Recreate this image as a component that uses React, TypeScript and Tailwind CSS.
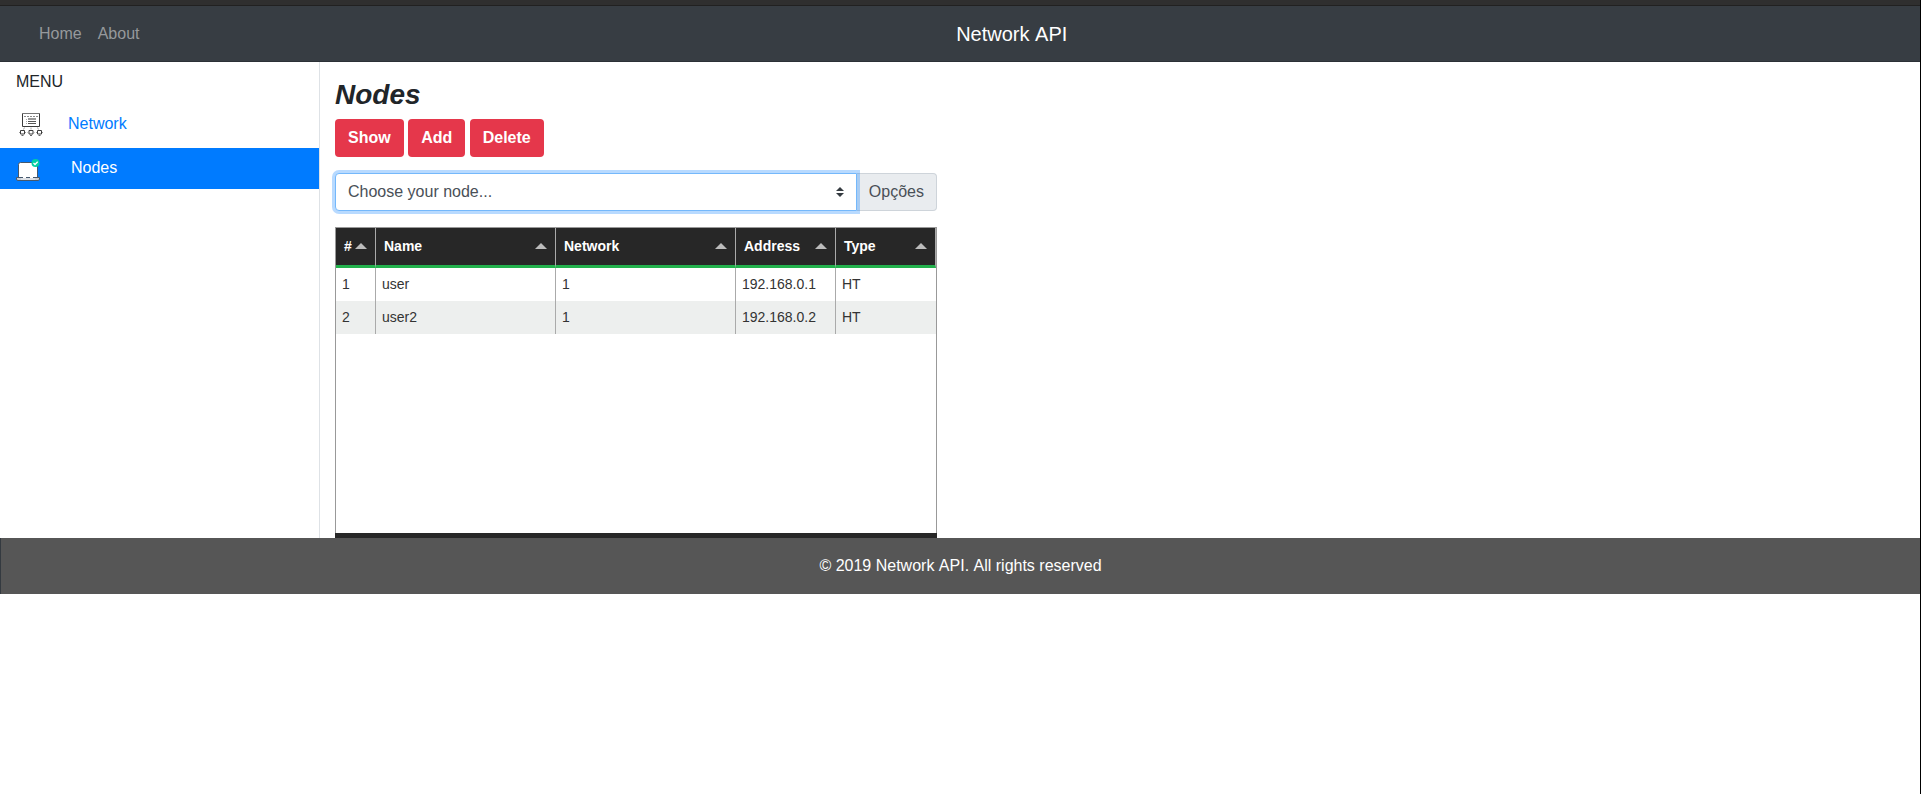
import React from "react";

const columns = [
  { label: "#", width: "w-10" },
  { label: "Name", width: "w-[180px]" },
  { label: "Network", width: "w-[180px]" },
  { label: "Address", width: "w-[100px]" },
  { label: "Type", width: "w-[100px]" },
];

const rows = [
  ["1", "user", "1", "192.168.0.1", "HT"],
  ["2", "user2", "1", "192.168.0.2", "HT"],
];

function NetworkIcon() {
  return (
    <svg className="size-6" viewBox="0 0 24 24" fill="none" aria-hidden="true">
      <path d="M3 .5h18" stroke="#777" />
      <path d="M3.500 1v12.500h17V1" stroke="#3c3c3c" />
      <path d="M5 3.500h14" stroke="#8a8a8a" strokeDasharray="2 1" />
      <path d="M7 6.500h1M7 8.500h1M7 10.500h1" stroke="#aaa" />
      <path d="M9 6h8" stroke="#999" strokeWidth="2" />
      <path d="M9 8.500h8M9 10.500h8" stroke="#555" />
      <path d="M5.500 14.500l-1 2M12 14.500v2M18.500 14.500l1 2" stroke="#aaa" />
      <path
        d="M1.500 17.500h4v3.500h-4zM10 17.500h4v3.500h-4zM18.500 17.500h4v3.500h-4z"
        stroke="#3c3c3c"
      />
      <path d="M0 19.500h1M6 19.500h1M8.500 19.500h1M14.500 19.500h1M17 19.500h1M23 19.500h1" stroke="#999" />
      <path d="M2.500 22.500h2M11 22.500h2M19.500 22.500h2" stroke="#666" />
    </svg>
  );
}

function LaptopIcon() {
  return (
    <svg className="size-6" viewBox="0 0 24 24" fill="none" aria-hidden="true">
      <path d="M2.500 18.500V5.500q0-2 2-2h15q2 0 2 2v13z" fill="#fff" stroke="#46586d" />
      <path d="M.5 18.500h23v1.500q0 1.500-1.500 1.500H2q-1.500 0-1.500-1.500z" fill="#c9ced6" stroke="#46586d" />
      <path d="M7 18.500h3M14 18.500h3" stroke="#fff" />
      <path d="M5 20h14" stroke="#eef0f2" />
      <circle cx="19.500" cy="4" r="4" fill="#00cfa5" />
      <path d="M17.500 4l1.500 1.500 2.700-2.700" stroke="#fff" strokeWidth="1.300" />
    </svg>
  );
}

function ActionButton({ children }: { children: React.ReactNode }) {
  return (
    <button
      type="button"
      className="h-[38px] rounded bg-[#e5374b] px-[13px] align-top text-base font-bold text-white"
    >
      {children}
    </button>
  );
}

export default function App() {
  return (
    <div className="min-h-screen border-r border-black bg-white font-['Liberation_Sans',Arial,sans-serif] text-base text-[#212529]">
      <div className="h-1.5 border-b border-[#212121] bg-[#2f2f2f]" />
      <header className="flex h-14 items-center border-b border-[#2b3036] bg-[#373d43] pl-[31px]">
        <nav className="flex text-[#96999c]">
          <a href="#home" className="px-2">
            Home
          </a>
          <a href="#about" className="px-2">
            About
          </a>
        </nav>
        <div className="flex-1 pr-11 text-center text-xl text-white [font-kerning:none]">Network API</div>
      </header>

      <div className="flex">
        <aside className="w-80 shrink-0 border-r border-[#dee2e6]">
          <h2 className="px-4 pt-2 pb-2">MENU</h2>
          <ul>
            <li>
              <a href="#network" className="flex h-[46px] gap-[25px] pt-[9px] pl-[19px] text-[#007bff]">
                <span className="pt-0.5">
                  <NetworkIcon />
                </span>
                <span className="pt-px">Network</span>
              </a>
            </li>
            <li>
              <a href="#nodes" className="flex h-[41px] gap-[31px] bg-[#007bff] pt-2 pl-4 text-white">
                <span className="pt-[3px]">
                  <LaptopIcon />
                </span>
                Nodes
              </a>
            </li>
          </ul>
        </aside>

        <main className="min-w-0 flex-1 px-[15px] pt-4">
          <div className="w-full max-w-[602px]">
            <h1 className="mb-2 text-[28px] leading-[33px] font-bold italic">Nodes</h1>
            <div className="mb-4">
              <ActionButton>Show</ActionButton> <ActionButton>Add</ActionButton>{" "}
              <ActionButton>Delete</ActionButton>
            </div>

            <div className="mb-4 flex h-[38px]">
              <div className="relative z-10 flex-1">
                <select
                  id="node"
                  defaultValue=""
                  className="h-full w-full appearance-none rounded-l border border-[#74b8fb] bg-white pr-7 pl-3 text-base text-[#495057] shadow-[0_0_0_3px_rgba(0,123,255,0.28)] outline-none"
                >
                  <option value="">Choose your node...</option>
                  <option value="1">user</option>
                  <option value="2">user2</option>
                </select>
                <svg
                  className="pointer-events-none absolute top-3.5 right-[13px] h-2.5 w-2"
                  viewBox="0 0 4 5"
                  fill="#343a40"
                  aria-hidden="true"
                >
                  <path d="M2 0L0 2h4zm0 5L0 3h4z" />
                </svg>
              </div>
              <label
                htmlFor="node"
                className="flex items-center rounded-r border border-l-0 border-[#ced4da] bg-[#e9ecef] px-3 text-[#495057]"
              >
                Opções
              </label>
            </div>

            <div className="border-x border-t border-[#999]">
              <div className="min-h-[305px]">
                <table className="w-full table-fixed border-separate border-spacing-0 text-sm text-[#333]">
                  <thead>
                    <tr>
                      {columns.map((column) => (
                        <th
                          key={column.label}
                          scope="col"
                          className={`${column.width} h-10 border-r border-b-[3px] border-r-[#aaa] border-b-[#22b14c] bg-[#272727] px-2 pb-0.5 text-left font-bold text-white`}
                        >
                          <span className="flex items-center justify-between">
                            {column.label}
                            <svg className="h-1.5 w-3 shrink-0" viewBox="0 0 12 6" fill="#bbb" aria-hidden="true">
                              <path d="M6 0l6 6H0z" />
                            </svg>
                          </span>
                        </th>
                      ))}
                    </tr>
                  </thead>
                  <tbody>
                    {rows.map((row) => (
                      <tr key={row[0]} className="even:bg-[#edefee]">
                        {row.map((cell, index) => (
                          <td key={index} className="h-[33px] border-r border-[#aaa] px-1.5 pb-0.5 last:border-r-0">
                            {cell}
                          </td>
                        ))}
                      </tr>
                    ))}
                  </tbody>
                </table>
              </div>
            </div>
            <div className="h-[5px] bg-[#272727]" />
          </div>
        </main>
      </div>

      <footer className="flex h-14 items-center justify-center border-l border-[#343a40] bg-[#565656] text-white [font-kerning:none]">
        © 2019 Network API. All rights reserved
      </footer>
    </div>
  );
}
